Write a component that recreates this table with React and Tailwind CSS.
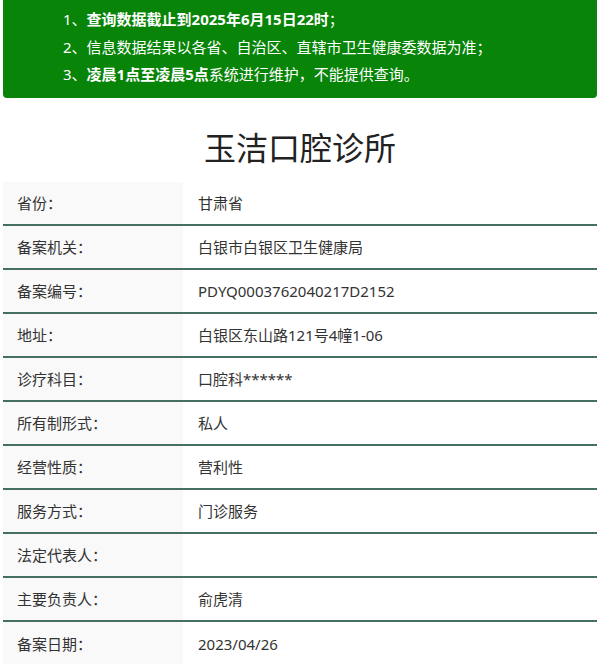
import React from "react";

const rows = [
  ["省份：", "甘肃省"],
  ["备案机关：", "白银市白银区卫生健康局"],
  ["备案编号：", "PDYQ0003762040217D2152"],
  ["地址：", "白银区东山路121号4幢1-06"],
  ["诊疗科目：", "口腔科******"],
  ["所有制形式：", "私人"],
  ["经营性质：", "营利性"],
  ["服务方式：", "门诊服务"],
  ["法定代表人：", ""],
  ["主要负责人：", "俞虎清"],
  ["备案日期：", "2023/04/26"],
];

export default function App() {
  return (
    <div
      className="w-[600px] h-[664px] overflow-hidden bg-white"
      style={{ fontFamily: '"Noto Sans", "Noto Sans CJK SC", sans-serif' }}
    >
      <div className="mx-[3px] h-[98px] bg-[#088408] rounded-b-[4px] text-white text-[15px] leading-[27.5px] pl-[60px] pt-[6px]">
        <div>1、<b>查询数据截止到2025年6月15日22时</b>；</div>
        <div>2、信息数据结果以各省、自治区、直辖市卫生健康委数据为准；</div>
        <div>3、<b>凌晨1点至凌晨5点</b>系统进行维护，不能提供查询。</div>
      </div>
      <div className="h-[84px] flex items-center justify-center text-[32px] text-[#222] pt-[16px]">
        玉洁口腔诊所
      </div>
      <div className="mx-[3px] text-[15px] text-[#333]">
        {rows.map(([k, v], i) => (
          <div
            key={i}
            className={`flex h-[44px] ${i < rows.length - 1 ? "border-b-2 border-[#456f60]" : ""}`}
          >
            <div className="w-[180px] bg-[#f9f9f9] flex items-center pl-[14px]">{k}</div>
            <div className="flex-1 flex items-center pl-[15px]">{v}</div>
          </div>
        ))}
      </div>
    </div>
  );
}
